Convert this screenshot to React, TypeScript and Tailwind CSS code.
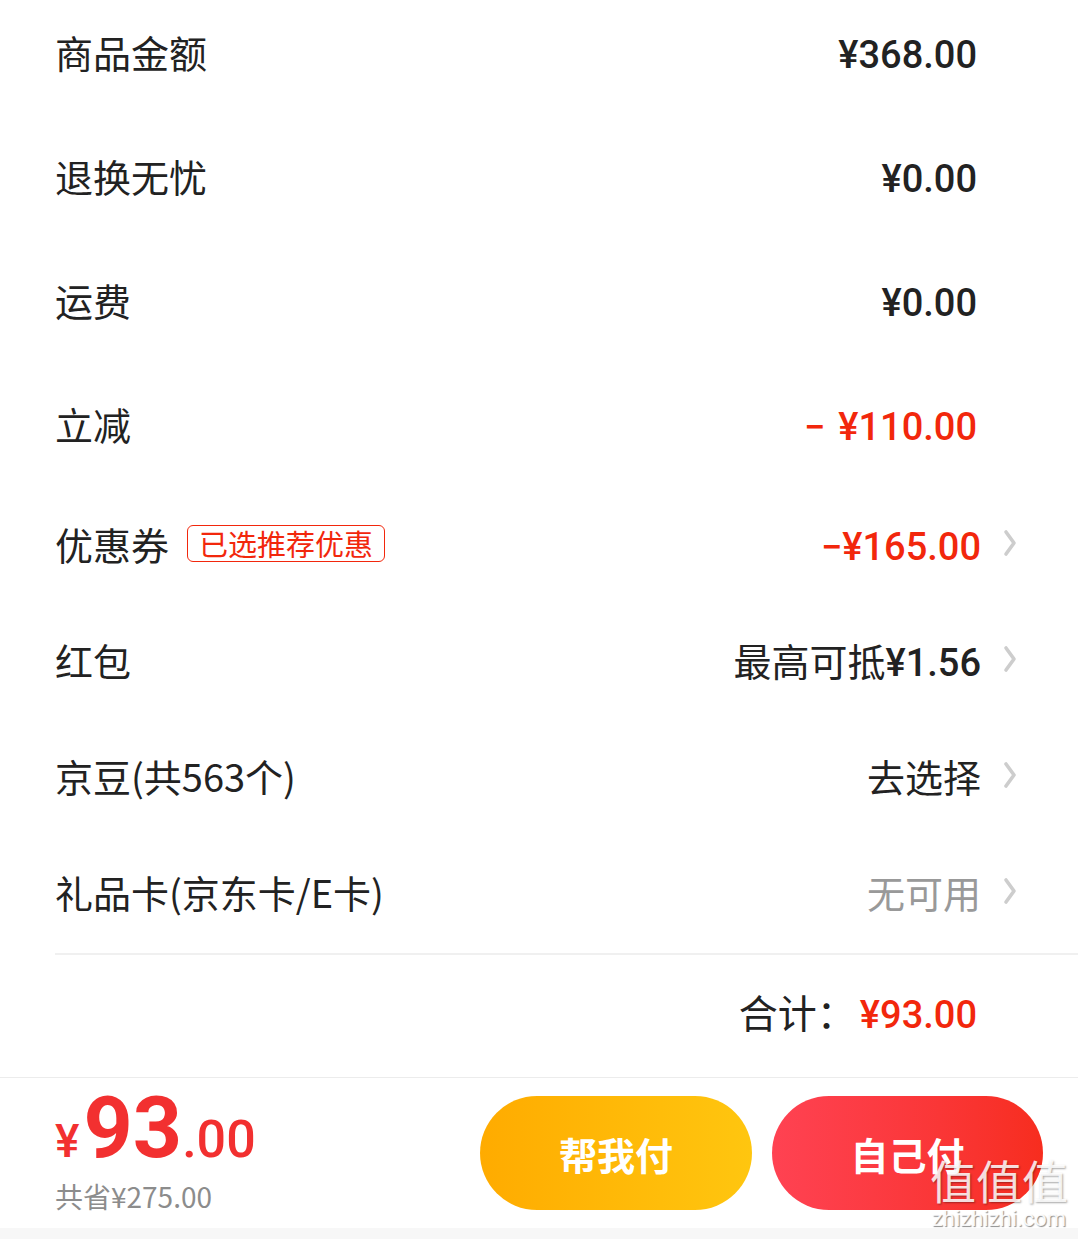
const font = { fontFamily: '"Noto Sans CJK SC", "Noto Sans", sans-serif' };
const num = { fontFamily: 'Roboto, "Noto Sans CJK SC", sans-serif' };

function Chevron() {
  return (
    <svg width="14" height="28" viewBox="0 0 14 28" className="ml-[22px] shrink-0">
      <path d="M3 3 L11 14 L3 25" fill="none" stroke="#cdcdcd" strokeWidth="3.6" strokeLinecap="round" strokeLinejoin="round" />
    </svg>
  );
}

type RowProps = {
  label: React.ReactNode;
  value: React.ReactNode;
  chevron?: boolean;
  tall?: boolean;
};

function Row({ label, value, chevron, tall }: RowProps) {
  return (
    <div
      className={`flex items-center justify-between pl-[55px] ${tall ? 'h-[124px]' : 'h-[116px]'} ${
        chevron ? 'pr-[61px]' : 'pr-[101px]'
      }`}
    >
      <div className="flex items-center text-[38px] text-[#222]">{label}</div>
      <div className="flex items-center text-[38px]">
        {value}
        {chevron && <Chevron />}
      </div>
    </div>
  );
}

function Num({ children, red }: { children: React.ReactNode; red?: boolean }) {
  return (
    <span className={`pt-[8px] font-medium ${red ? 'text-[#f2270c]' : 'text-[#222]'}`} style={num}>
      {children}
    </span>
  );
}

export default function App() {
  return (
    <div className="w-[1078px] h-[1239px] bg-white overflow-hidden relative" style={font}>
      <div className="-mt-[11px]">
        <Row tall label="商品金额" value={<Num>¥368.00</Num>} />
        <Row tall label="退换无忧" value={<Num>¥0.00</Num>} />
        <Row tall label="运费" value={<Num>¥0.00</Num>} />
        <Row
          tall
          label="立减"
          value={
            <>
              <Num red>−</Num>
              <span className="w-[13px]" />
              <Num red>¥110.00</Num>
            </>
          }
        />
        <Row
          chevron
          label={
            <>
              优惠券
              <span className="ml-[18px] h-[37px] px-[11px] flex items-center rounded-[6px] border border-[#f2270c] text-[#f2270c] text-[29px] leading-none">
                已选推荐优惠
              </span>
            </>
          }
          value={
            <>
              <Num red>−</Num>
              <Num red>¥165.00</Num>
            </>
          }
        />
        <Row
          chevron
          label="红包"
          value={
            <>
              <span className="text-[#222]">最高可抵</span>
              <Num>¥1.56</Num>
            </>
          }
        />
        <Row chevron label="京豆(共563个)" value={<span className="text-[#222]">去选择</span>} />
        <Row chevron label="礼品卡(京东卡/E卡)" value={<span className="text-[#999]">无可用</span>} />
      </div>

      <div className="mt-[4px] ml-[55px] h-[2px] bg-[#f0f0f0]" />

      <div className="h-[122px] pb-[10px] flex items-center justify-end pr-[101px]">
        <span className="text-[39px] mr-[4px] text-[#222]">合计：</span>
        <Num red>
          <span className="text-[38px]">¥93.00</span>
        </Num>
      </div>

      <div className="h-[1px] bg-[#ececec]" />

      <div className="h-[150px] flex items-center pl-[55px] pr-[35px]">
        <div className="flex-1 self-start pt-[7px] flex flex-col">
          <div className="flex items-baseline text-[#f23030] leading-none" style={num}>
            <span className="text-[46px] font-medium">¥</span>
            <span className="text-[86px] font-bold ml-[4px]">93</span>
            <span className="text-[52px] font-medium">.00</span>
          </div>
          <div className="mt-[11px] text-[28px] leading-none text-[#8c8c8c]">共省¥275.00</div>
        </div>
        <div className="flex gap-[20px]">
          <button className="w-[272px] h-[114px] rounded-full bg-gradient-to-r from-[#ffab00] to-[#ffc60f] text-white text-[38px] font-bold">
            帮我付
          </button>
          <button className="w-[271px] h-[114px] rounded-full bg-gradient-to-r from-[#ff4252] to-[#f72d1e] text-white text-[38px] font-bold">
            自己付
          </button>
        </div>
      </div>

      <div className="h-[20px] bg-[#f7f7f7]" />

      <div className="absolute left-[928px] top-[1156px] w-[142px] flex flex-col items-center pointer-events-none">
        <span
          className="text-[46px] leading-none whitespace-nowrap text-white/85"
          style={{ textShadow: '1px 1px 2px rgba(0,0,0,0.35)' }}
        >
          值值值
        </span>
        <span
          className="text-[22px] leading-none mt-[6px] whitespace-nowrap text-white/90"
          style={{ ...num, textShadow: '1px 1px 1px rgba(0,0,0,0.45)' }}
        >
          zhizhizhi.com
        </span>
      </div>
    </div>
  );
}
